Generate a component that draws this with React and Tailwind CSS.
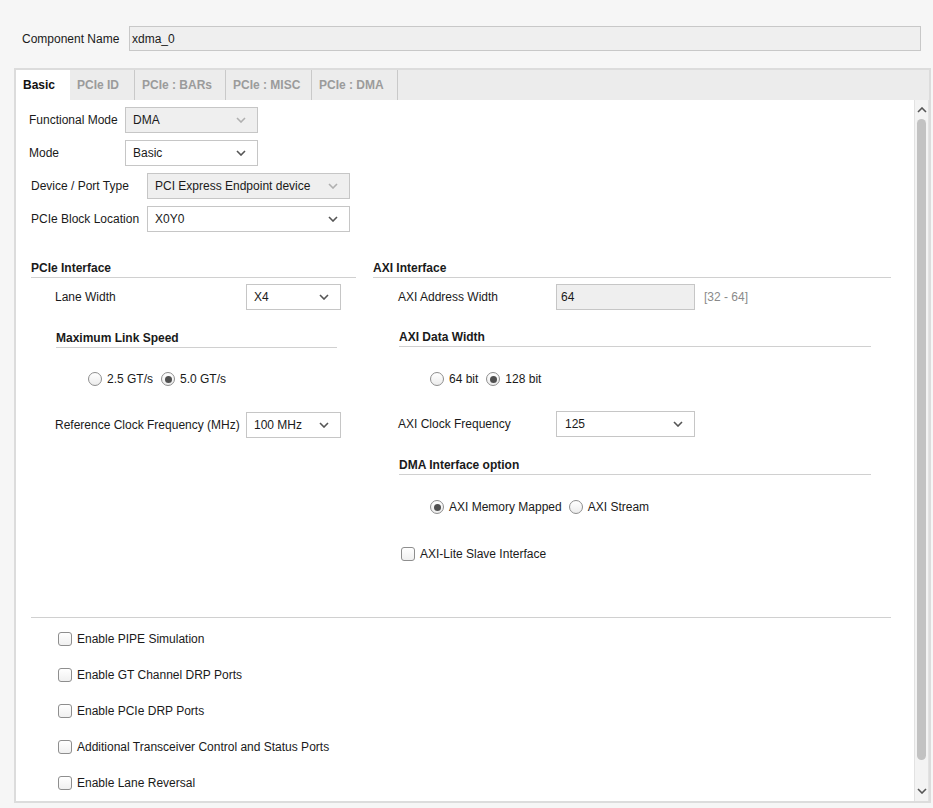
import React from "react";

const Chevron = ({ disabled, up }) => (
  <svg width="10" height="6" viewBox="0 0 10 6" className="shrink-0">
    <path
      d={up ? "M1 5l4-4 4 4" : "M1 1l4 4 4-4"}
      fill="none"
      stroke={disabled ? "#b0b0b0" : "#555555"}
      strokeWidth="1.6"
    />
  </svg>
);

const Select = ({ value, disabled, className = "", textPad = "pl-[7px]" }) => (
  <div
    className={`h-[26px] flex items-center justify-between border border-[#c6c6c6] ${textPad} pr-[11px] ${
      disabled ? "bg-[#efefef]" : "bg-white"
    } ${className}`}
  >
    <span className="text-[#1a1a1a]">{value}</span>
    <Chevron disabled={disabled} />
  </div>
);

const Radio = ({ checked, label }) => (
  <div className="flex items-center">
    <div className="w-[14px] h-[14px] rounded-full border border-[#8e8e8e] bg-gradient-to-b from-[#ffffff] to-[#ececec] flex items-center justify-center">
      {checked && <div className="w-[7px] h-[7px] rounded-full bg-[#505050]" />}
    </div>
    <span className="ml-[5px]">{label}</span>
  </div>
);

const Check = ({ label }) => (
  <div className="flex items-center h-[14px]">
    <div className="w-[14px] h-[14px] rounded-[3px] border border-[#8e8e8e] bg-gradient-to-b from-[#ffffff] to-[#f0f0f0]" />
    <span className="ml-[5px]">{label}</span>
  </div>
);

const Header = ({ children, className = "" }) => (
  <div className={`font-bold border-b border-[#d0d0d0] pb-[2px] leading-[14px] ${className}`}>
    {children}
  </div>
);

export default function App() {
  return (
    <div
      className="w-[933px] h-[808px] bg-[#f6f6f6] text-[12px] text-[#1a1a1a] overflow-hidden"
      style={{ fontFamily: '"Liberation Sans", Arial, sans-serif' }}
    >
      {/* Component name */}
      <div className="flex items-center pt-[26px] pl-[22px] pr-[12px]">
        <span className="w-[107px] shrink-0">Component Name</span>
        <div className="flex-1 h-[25px] bg-[#efefef] border border-[#c8c8c8] flex items-center pl-[2px]">
          xdma_0
        </div>
      </div>

      {/* Panel */}
      <div className="mt-[17px] ml-[14px] w-[917px] h-[735px] border-2 border-[#dcdcdc] flex flex-col bg-white">
        {/* Tabs */}
        <div className="h-[30px] bg-[#ececec] flex items-stretch shrink-0 font-bold">
          <div className="w-[54px] bg-white flex items-center pl-[7px] text-[#111]">Basic</div>
          <div className="w-[65px] flex items-center pl-[7px] text-[#9b9b9b] border-r border-[#c9c9c9]">PCIe ID</div>
          <div className="w-[91px] flex items-center pl-[7px] text-[#9b9b9b] border-r border-[#c9c9c9]">PCIe : BARs</div>
          <div className="w-[86px] flex items-center pl-[7px] text-[#9b9b9b] border-r border-[#c9c9c9]">PCIe : MISC</div>
          <div className="w-[86px] flex items-center pl-[7px] text-[#9b9b9b] border-r border-[#c9c9c9]">PCIe : DMA</div>
        </div>

        {/* Body */}
        <div className="flex flex-1 min-h-0">
          <div className="flex-1 min-w-0">
            {/* top block */}
            <div className="pl-[13px] pt-[7px]">
              <div className="flex items-center">
                <span className="w-[96px]">Functional Mode</span>
                <Select value="DMA" disabled className="w-[133px]" />
              </div>
              <div className="flex items-center mt-[7px]">
                <span className="w-[96px]">Mode</span>
                <Select value="Basic" className="w-[133px]" />
              </div>
              <div className="flex items-center mt-[7px] ml-[2px]">
                <span className="w-[116px]">Device / Port Type</span>
                <Select value="PCI Express Endpoint device" disabled className="w-[203px]" />
              </div>
              <div className="flex items-center mt-[7px] ml-[2px]">
                <span className="w-[116px]">PCIe Block Location</span>
                <Select value="X0Y0" className="w-[203px]" />
              </div>
            </div>

            {/* Two columns */}
            <div className="flex items-start pl-[15px] mt-[29px]">
              {/* Left */}
              <div className="w-[325px]">
                <Header>PCIe Interface</Header>
                <div className="flex items-center mt-[6px] pl-[24px]">
                  <span className="w-[191px]">Lane Width</span>
                  <Select value="X4" className="w-[95px]" />
                </div>
                <Header className="mt-[21px] ml-[25px] w-[281px]">Maximum Link Speed</Header>
                <div className="flex items-center mt-[24px] pl-[57px] gap-[8px] h-[14px]">
                  <Radio label="2.5 GT/s" />
                  <Radio checked label="5.0 GT/s" />
                </div>
                <div className="flex items-center mt-[26px] pl-[24px]">
                  <span className="w-[191px]">Reference Clock Frequency (MHz)</span>
                  <Select value="100 MHz" className="w-[95px]" />
                </div>
              </div>

              {/* Right */}
              <div className="w-[518px] ml-[17px]">
                <Header>AXI Interface</Header>
                <div className="flex items-center mt-[6px] pl-[25px]">
                  <span className="w-[158px]">AXI Address Width</span>
                  <div className="w-[139px] h-[26px] bg-[#efefef] border border-[#c6c6c6] flex items-center pl-[4px]">64</div>
                  <span className="ml-[9px] text-[#8a8a8a]">[32 - 64]</span>
                </div>
                <Header className="mt-[20px] ml-[26px] w-[472px]">AXI Data Width</Header>
                <div className="flex items-center mt-[25px] pl-[57px] gap-[8px] h-[14px]">
                  <Radio label="64 bit" />
                  <Radio checked label="128 bit" />
                </div>
                <div className="flex items-center mt-[25px] pl-[25px]">
                  <span className="w-[158px]">AXI Clock Frequency</span>
                  <Select value="125" className="w-[139px]" textPad="pl-[8px]" />
                </div>
                <Header className="mt-[21px] ml-[26px] w-[472px]">DMA Interface option</Header>
                <div className="flex items-center mt-[25px] pl-[57px] gap-[7px] h-[14px]">
                  <Radio checked label="AXI Memory Mapped" />
                  <Radio label="AXI Stream" />
                </div>
                <div className="mt-[33px] pl-[28px]">
                  <Check label="AXI-Lite Slave Interface" />
                </div>
              </div>
            </div>

            {/* separator */}
            <div className="ml-[15px] w-[860px] border-b border-[#d0d0d0] mt-[56px]" />

            <div className="pl-[42px] mt-[14px] flex flex-col gap-[22px]">
              <Check label="Enable PIPE Simulation" />
              <Check label="Enable GT Channel DRP Ports" />
              <Check label="Enable PCIe DRP Ports" />
              <Check label="Additional Transceiver Control and Status Ports" />
              <Check label="Enable Lane Reversal" />
            </div>
          </div>

          {/* Scrollbar */}
          <div className="w-[15px] shrink-0 border-l border-r border-[#e2e2e2] bg-[#f3f3f3] flex flex-col items-center">
            <div className="h-[16px] flex items-center justify-center mt-[2px]">
              <Chevron up />
            </div>
            <div className="w-[9px] flex-1 bg-[#c2c2c2] rounded-t-[5px] rounded-b-[5px] mt-[1px] mb-[23px]" />
            <div className="h-[16px] flex items-center justify-center mb-[2px]">
              <Chevron />
            </div>
          </div>
        </div>
      </div>
    </div>
  );
}
